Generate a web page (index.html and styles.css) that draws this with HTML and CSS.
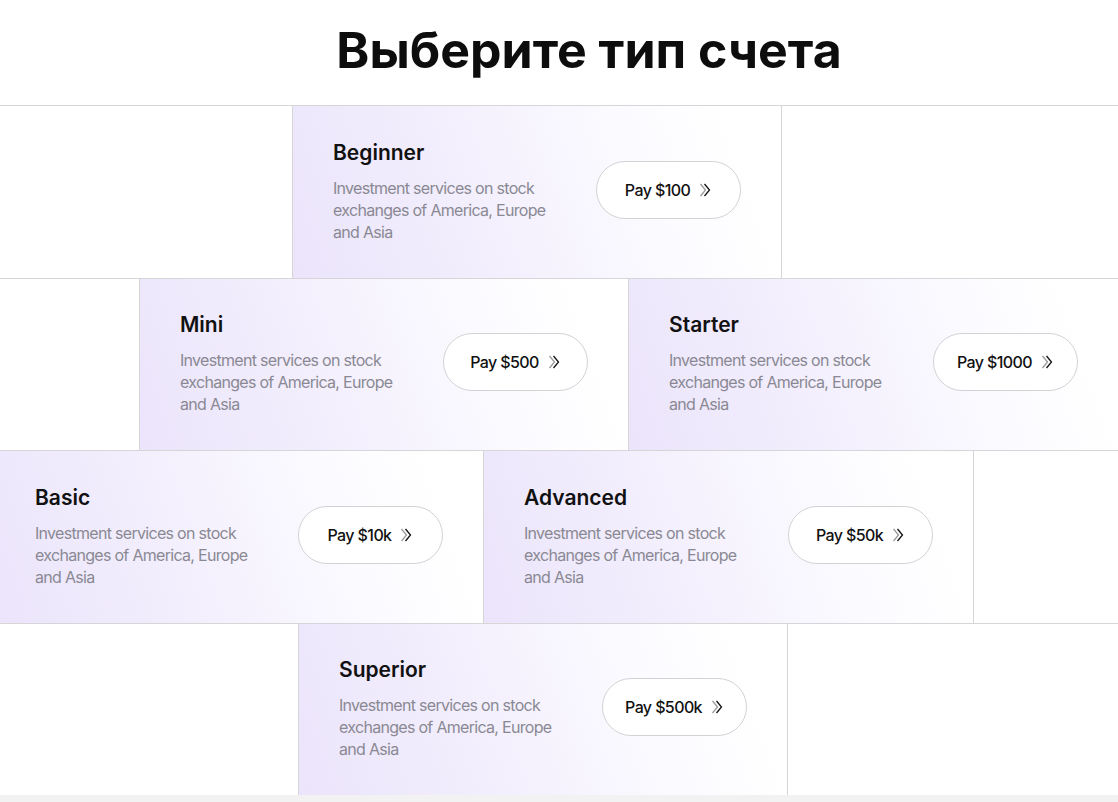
FILE: index.html
```html
<!DOCTYPE html>
<html lang="ru">
<head>
  <meta charset="UTF-8" />
  <meta name="viewport" content="width=device-width, initial-scale=1.0" />
  <title>Выберите тип счета</title>
  <link rel="stylesheet" href="styles.css">
</head>
<body>
  <header class="page-head">
    <h1>Выберите тип счета</h1>
  </header>

  <section class="plans">
    <div class="row row-1">
      <div class="card">
        <div class="card-text">
          <h3>Beginner</h3>
          <p>Investment services on stock exchanges of America, Europe and Asia</p>
        </div>
        <button class="pay">Pay $100 <svg viewBox="0 0 14 16"><polyline class="ch1" points="2.5,2 7.5,8 2.5,14"/><polyline class="ch2" points="6.5,2 11.5,8 6.5,14"/></svg></button>
      </div>
    </div>

    <div class="row row-2">
      <div class="card">
        <div class="card-text">
          <h3>Mini</h3>
          <p>Investment services on stock exchanges of America, Europe and Asia</p>
        </div>
        <button class="pay">Pay $500 <svg viewBox="0 0 14 16"><polyline class="ch1" points="2.5,2 7.5,8 2.5,14"/><polyline class="ch2" points="6.5,2 11.5,8 6.5,14"/></svg></button>
      </div>
      <div class="card">
        <div class="card-text">
          <h3>Starter</h3>
          <p>Investment services on stock exchanges of America, Europe and Asia</p>
        </div>
        <button class="pay">Pay $1000 <svg viewBox="0 0 14 16"><polyline class="ch1" points="2.5,2 7.5,8 2.5,14"/><polyline class="ch2" points="6.5,2 11.5,8 6.5,14"/></svg></button>
      </div>
    </div>

    <div class="row row-3">
      <div class="card">
        <div class="card-text">
          <h3>Basic</h3>
          <p>Investment services on stock exchanges of America, Europe and Asia</p>
        </div>
        <button class="pay">Pay $10k <svg viewBox="0 0 14 16"><polyline class="ch1" points="2.5,2 7.5,8 2.5,14"/><polyline class="ch2" points="6.5,2 11.5,8 6.5,14"/></svg></button>
      </div>
      <div class="card">
        <div class="card-text">
          <h3>Advanced</h3>
          <p>Investment services on stock exchanges of America, Europe and Asia</p>
        </div>
        <button class="pay">Pay $50k <svg viewBox="0 0 14 16"><polyline class="ch1" points="2.5,2 7.5,8 2.5,14"/><polyline class="ch2" points="6.5,2 11.5,8 6.5,14"/></svg></button>
      </div>
    </div>

    <div class="row row-4">
      <div class="card">
        <div class="card-text">
          <h3>Superior</h3>
          <p>Investment services on stock exchanges of America, Europe and Asia</p>
        </div>
        <button class="pay">Pay $500k <svg viewBox="0 0 14 16"><polyline class="ch1" points="2.5,2 7.5,8 2.5,14"/><polyline class="ch2" points="6.5,2 11.5,8 6.5,14"/></svg></button>
      </div>
    </div>
  </section>

  <div class="page-foot"></div>
</body>
</html>
```

FILE: styles.css
```css
body {
  font-family: Inter, "Noto Sans", sans-serif;
  background-color: #ffffff;
  color: #111111;
  margin: 0;
  padding: 0;
  overflow-x: hidden;
}
.page-head {
  height: 105px;
  display: flex;
  align-items: center;
  justify-content: center;
  padding-left: 60px;
}
.page-head h1 {
  margin: -6px 0 0 0;
  font-size: 50px;
  font-weight: 700;
  letter-spacing: 0;
  line-height: 1;
  color: #0d0d0d;
}
.row {
  display: flex;
  height: 171.5px;
  border-top: 1px solid #d6d6d9;
}
.row-1 { padding-left: 292px; }
.row-2 { padding-left: 139px; }
.row-3 { margin-left: -6px; }
.row-4 { padding-left: 298px; }
.card {
  flex: 0 0 490px;
  box-sizing: border-box;
  border-left: 1px solid #d6d6d9;
  border-right: 1px solid #d6d6d9;
  padding: 0 40px;
  display: flex;
  align-items: center;
  justify-content: space-between;
  background: linear-gradient(70deg, #ebe4fb 0%, #f3effd 38%, #fbfaff 68%, #ffffff 90%);
}
.card + .card {
  margin-left: -1px;
  flex-basis: 491px;
}
.card-text {
  margin-top: -2px;
}
.card-text h3 {
  margin: 0 0 10px 0;
  font-size: 21px;
  font-weight: 600;
  line-height: 28px;
  letter-spacing: 0;
  color: #111111;
}
.card-text p {
  margin: 0;
  width: 225px;
  font-size: 16px;
  line-height: 22px;
  color: #8a8993;
  letter-spacing: -0.7px;
}
.pay {
  width: 145px;
  height: 58px;
  margin-top: -4px;
  border: 1px solid #d3d3d6;
  border-radius: 29px;
  background-color: #ffffff;
  font-family: inherit;
  font-size: 16px;
  font-weight: 500;
  letter-spacing: -0.6px;
  color: #111111;
  display: flex;
  align-items: center;
  justify-content: center;
  gap: 8px;
  cursor: pointer;
}
.pay svg {
  width: 14px;
  height: 16px;
  fill: none;
  stroke-width: 1.3;
}
.pay .ch1 { stroke: #9a9a9a; }
.pay .ch2 { stroke: #111111; }
.page-foot {
  height: 40px;
  background-color: #f2f2f2;
}
```
